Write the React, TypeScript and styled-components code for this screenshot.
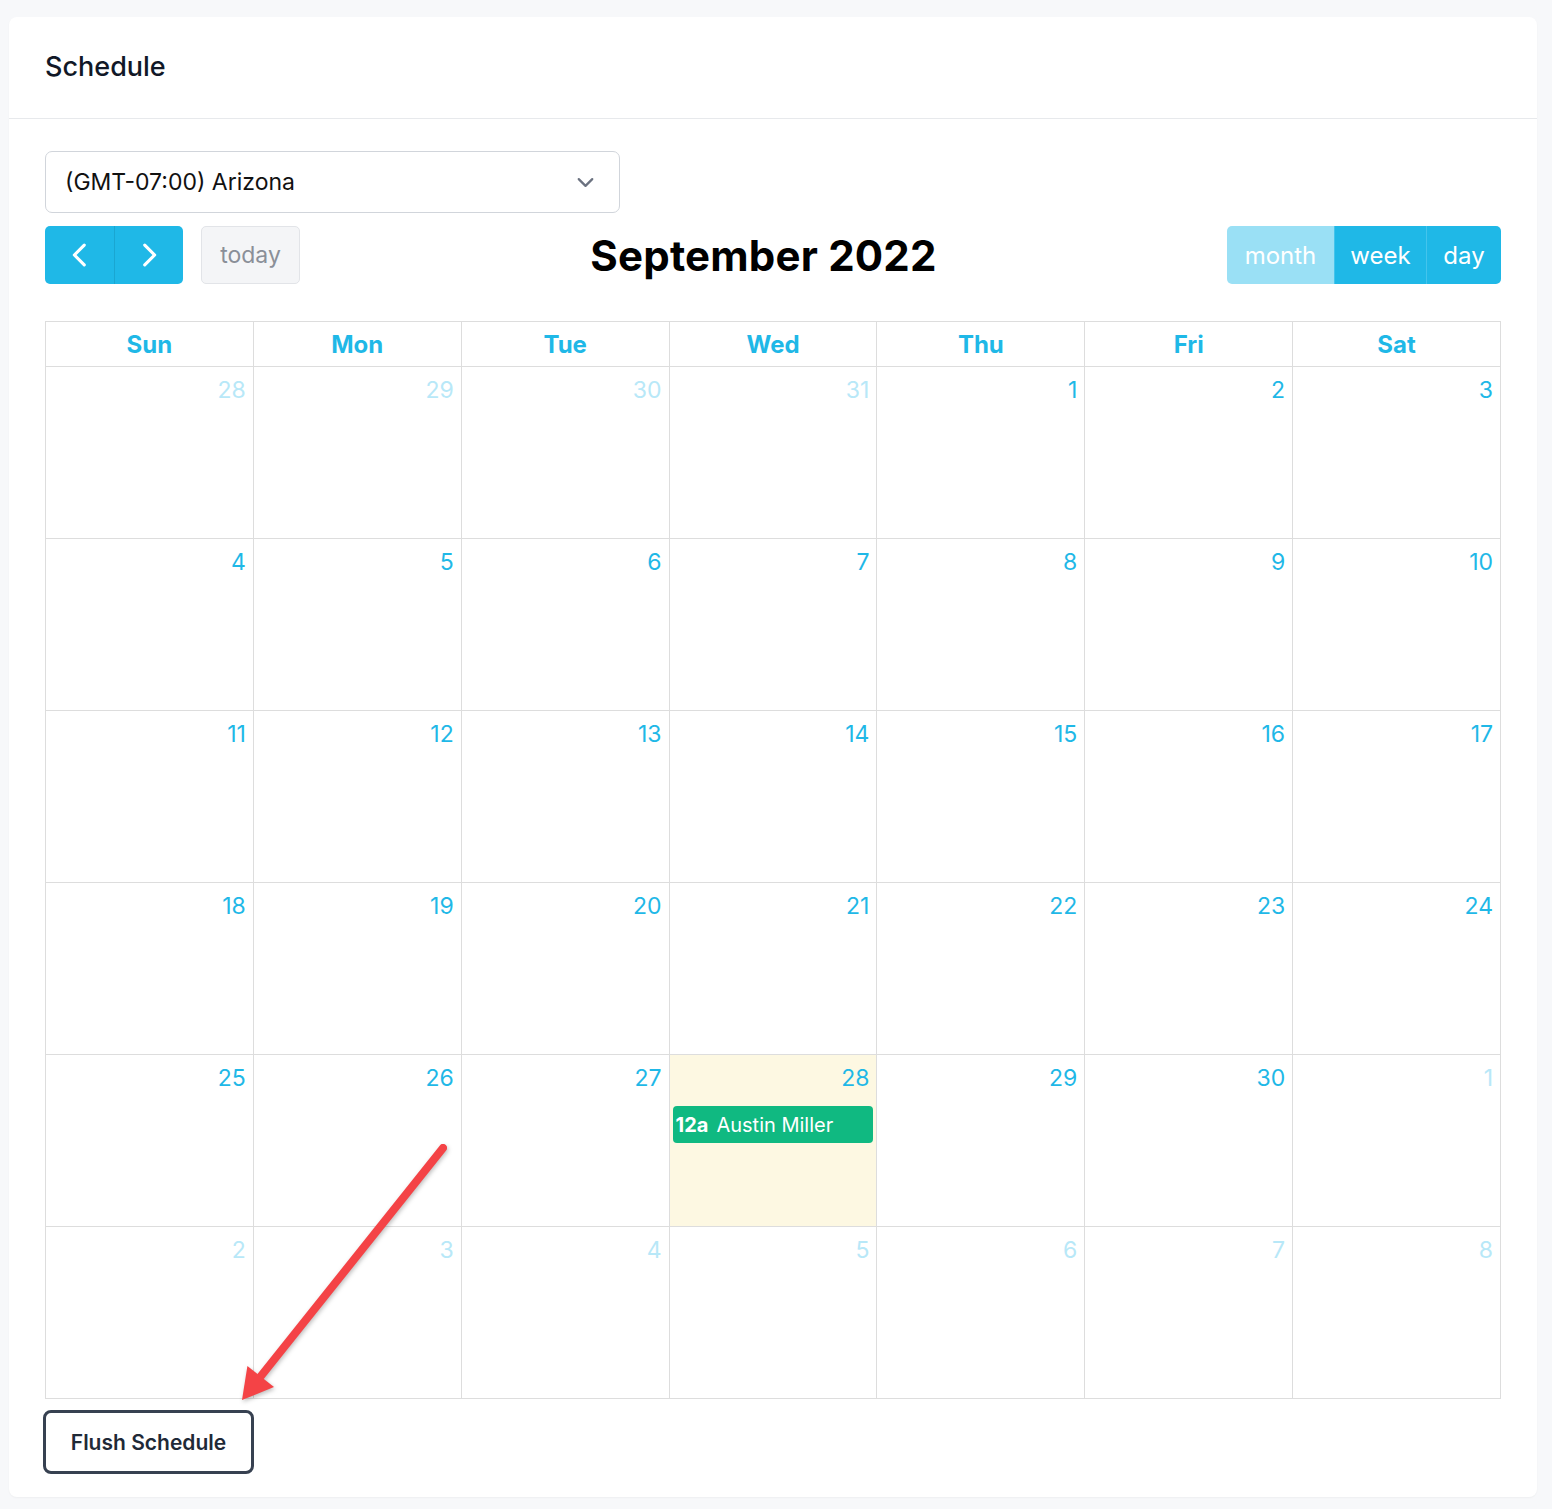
import React from 'react';
import styled, { createGlobalStyle } from 'styled-components';

const GlobalStyle = createGlobalStyle`
    body {
        margin: 0;
        background: #f7f8fa;
        font-family: Inter, "Noto Sans", sans-serif;
    }
`;

const BLUE = '#1fb8e7';

const Page = styled.div`
    padding: 17px 15px 12px 9px;
`;

const Card = styled.div`
    position: relative;
    background: #fff;
    border-radius: 8px;
    box-shadow: 0 1px 2px rgba(0, 0, 0, 0.04);
`;

const CardHeader = styled.div`
    height: 102px;
    display: flex;
    align-items: center;
    padding: 0 36px 2px;
    box-sizing: border-box;
    border-bottom: 1px solid #e7e9ec;
    font-size: 27px;
    font-weight: 500;
    color: #111827;
`;

const CardBody = styled.div`
    padding: 32px 36px 23px 36px;
    display: flex;
    flex-direction: column;
`;

const Select = styled.div`
    width: 575px;
    height: 62px;
    box-sizing: border-box;
    border: 1px solid #d1d5db;
    border-radius: 7px;
    display: flex;
    align-items: center;
    justify-content: space-between;
    padding: 0 20px 0 19px;
    font-size: 23px;
    color: #111;
`;

const Toolbar = styled.div`
    margin-top: 13px;
    height: 58px;
    display: flex;
    justify-content: space-between;
    align-items: center;
`;

const ToolLeft = styled.div`
    display: flex;
    gap: 18px;
    align-items: stretch;
    height: 58px;
`;

const ButtonGroup = styled.div`
    display: flex;
    border-radius: 5px;
    overflow: hidden;
    height: 58px;
`;

const NavButton = styled.button`
    width: 69px;
    border: none;
    background: ${BLUE};
    color: #fff;
    display: flex;
    align-items: center;
    justify-content: center;
    padding: 0;
    & + & {
        border-left: 1px solid #1aa6d1;
    }
`;

const TodayButton = styled.button`
    width: 99px;
    height: 58px;
    border: 1px solid #e2e4e8;
    border-radius: 5px;
    background: #f4f5f7;
    color: #8a8f98;
    font-family: inherit;
    font-size: 23px;
    padding: 0;
`;

const Title = styled.h2`
    margin: 0;
    font-size: 42px;
    font-weight: 700;
    color: #000;
    letter-spacing: 0.2px;
`;

const ViewButton = styled.button<{ $active?: boolean; $w: number }>`
    width: ${p => p.$w}px;
    border: none;
    background: ${p => (p.$active ? '#9ae0f5' : BLUE)};
    color: #fff;
    font-family: inherit;
    font-size: 24px;
    padding: 0;
    & + & {
        border-left: 1px solid ${p => (p.$active ? BLUE : '#44c4ec')};
    }
`;

const Calendar = styled.div`
    margin-top: 37px;
    display: grid;
    grid-template-columns: repeat(7, 1fr);
    grid-template-rows: 45px repeat(6, 172px);
    border-top: 1px solid #dddddd;
    border-left: 1px solid #dddddd;
`;

const HeadCell = styled.div`
    border-right: 1px solid #dddddd;
    border-bottom: 1px solid #dddddd;
    display: flex;
    align-items: center;
    justify-content: center;
    font-size: 24px;
    font-weight: 700;
    color: ${BLUE};
`;

const DayCell = styled.div<{ $today?: boolean }>`
    border-right: 1px solid #dddddd;
    border-bottom: 1px solid #dddddd;
    background: ${p => (p.$today ? '#fdf8e2' : '#fff')};
    display: flex;
    flex-direction: column;
    padding: 7px 3px 0 3px;
`;

const DayNumber = styled.div<{ $other?: boolean }>`
    text-align: right;
    padding-right: 4px;
    font-size: 23px;
    line-height: 32px;
    color: ${p => (p.$other ? '#b8e8f8' : BLUE)};
`;

const Event = styled.div`
    margin-top: 12px;
    height: 37px;
    border-radius: 4px;
    background: #10b981;
    color: #fff;
    font-size: 20px;
    display: flex;
    align-items: center;
    padding: 0 3px;
    gap: 8px;
    b {
        font-weight: 700;
    }
`;

const FlushButton = styled.button`
    margin-top: 11px;
    margin-left: -2px;
    align-self: flex-start;
    width: 211px;
    height: 64px;
    border: 3px solid #374151;
    border-radius: 8px;
    background: #fff;
    color: #1f2937;
    font-family: inherit;
    font-size: 21px;
    font-weight: 600;
`;

const Arrow = styled.svg`
    position: absolute;
    left: 225px;
    top: 1120px;
    width: 230px;
    height: 275px;
    pointer-events: none;
    overflow: visible;
    filter: drop-shadow(1px 2px 2px rgba(0, 0, 0, 0.25));
`;

const weekdays = ['Sun', 'Mon', 'Tue', 'Wed', 'Thu', 'Fri', 'Sat'];

type Day = { n: number; other: boolean };

const buildDays = (): Day[] => {
    const days: Day[] = [];
    [28, 29, 30, 31].forEach(n => days.push({ n, other: true }));
    for (let n = 1; n <= 30; n++) days.push({ n, other: false });
    for (let n = 1; n <= 8; n++) days.push({ n, other: true });
    return days;
};

const Chevron = ({ dir }: { dir: 'left' | 'right' | 'down' }) => {
    const d = dir === 'left' ? 'M15 5 L8 12 L15 19' : dir === 'right' ? 'M9 5 L16 12 L9 19' : 'M6 9 L12 15 L18 9';
    const color = dir === 'down' ? '#6b7280' : '#fff';
    const size = dir === 'down' ? 27 : 34;
    return (
        <svg width={size} height={size} viewBox="0 0 24 24" fill="none">
            <path d={d} stroke={color} strokeWidth={dir === 'down' ? 2 : 2.2} strokeLinecap="round" strokeLinejoin="round" />
        </svg>
    );
};

const App: React.FC = () => {
    const days = buildDays();

    return (
        <Page>
            <GlobalStyle />
            <Card>
                <CardHeader>Schedule</CardHeader>
                <CardBody>
                    <Select>
                        (GMT-07:00) Arizona
                        <Chevron dir="down" />
                    </Select>
                    <Toolbar>
                        <ToolLeft>
                            <ButtonGroup>
                                <NavButton><Chevron dir="left" /></NavButton>
                                <NavButton><Chevron dir="right" /></NavButton>
                            </ButtonGroup>
                            <TodayButton>today</TodayButton>
                        </ToolLeft>
                        <Title>September 2022</Title>
                        <ButtonGroup>
                            <ViewButton $active $w={107}>month</ViewButton>
                            <ViewButton $w={92}>week</ViewButton>
                            <ViewButton $w={75}>day</ViewButton>
                        </ButtonGroup>
                    </Toolbar>
                    <Calendar>
                        {weekdays.map(w => (
                            <HeadCell key={w}>{w}</HeadCell>
                        ))}
                        {days.map((day, i) => {
                            const isToday = !day.other && day.n === 28;
                            return (
                                <DayCell key={i} $today={isToday}>
                                    <DayNumber $other={day.other}>{day.n}</DayNumber>
                                    {isToday && (
                                        <Event>
                                            <b>12a</b>
                                            <span>Austin Miller</span>
                                        </Event>
                                    )}
                                </DayCell>
                            );
                        })}
                    </Calendar>
                    <FlushButton>Flush Schedule</FlushButton>
                </CardBody>
                <Arrow viewBox="0 0 230 275">
                    <line x1={209} y1={11} x2={27} y2={239} stroke="#f44346" strokeWidth={8} strokeLinecap="round" />
                    <polygon points="8,263 40,250.1 13.4,228.9" fill="#f44346" />
                </Arrow>
            </Card>
        </Page>
    );
};

export default App;
